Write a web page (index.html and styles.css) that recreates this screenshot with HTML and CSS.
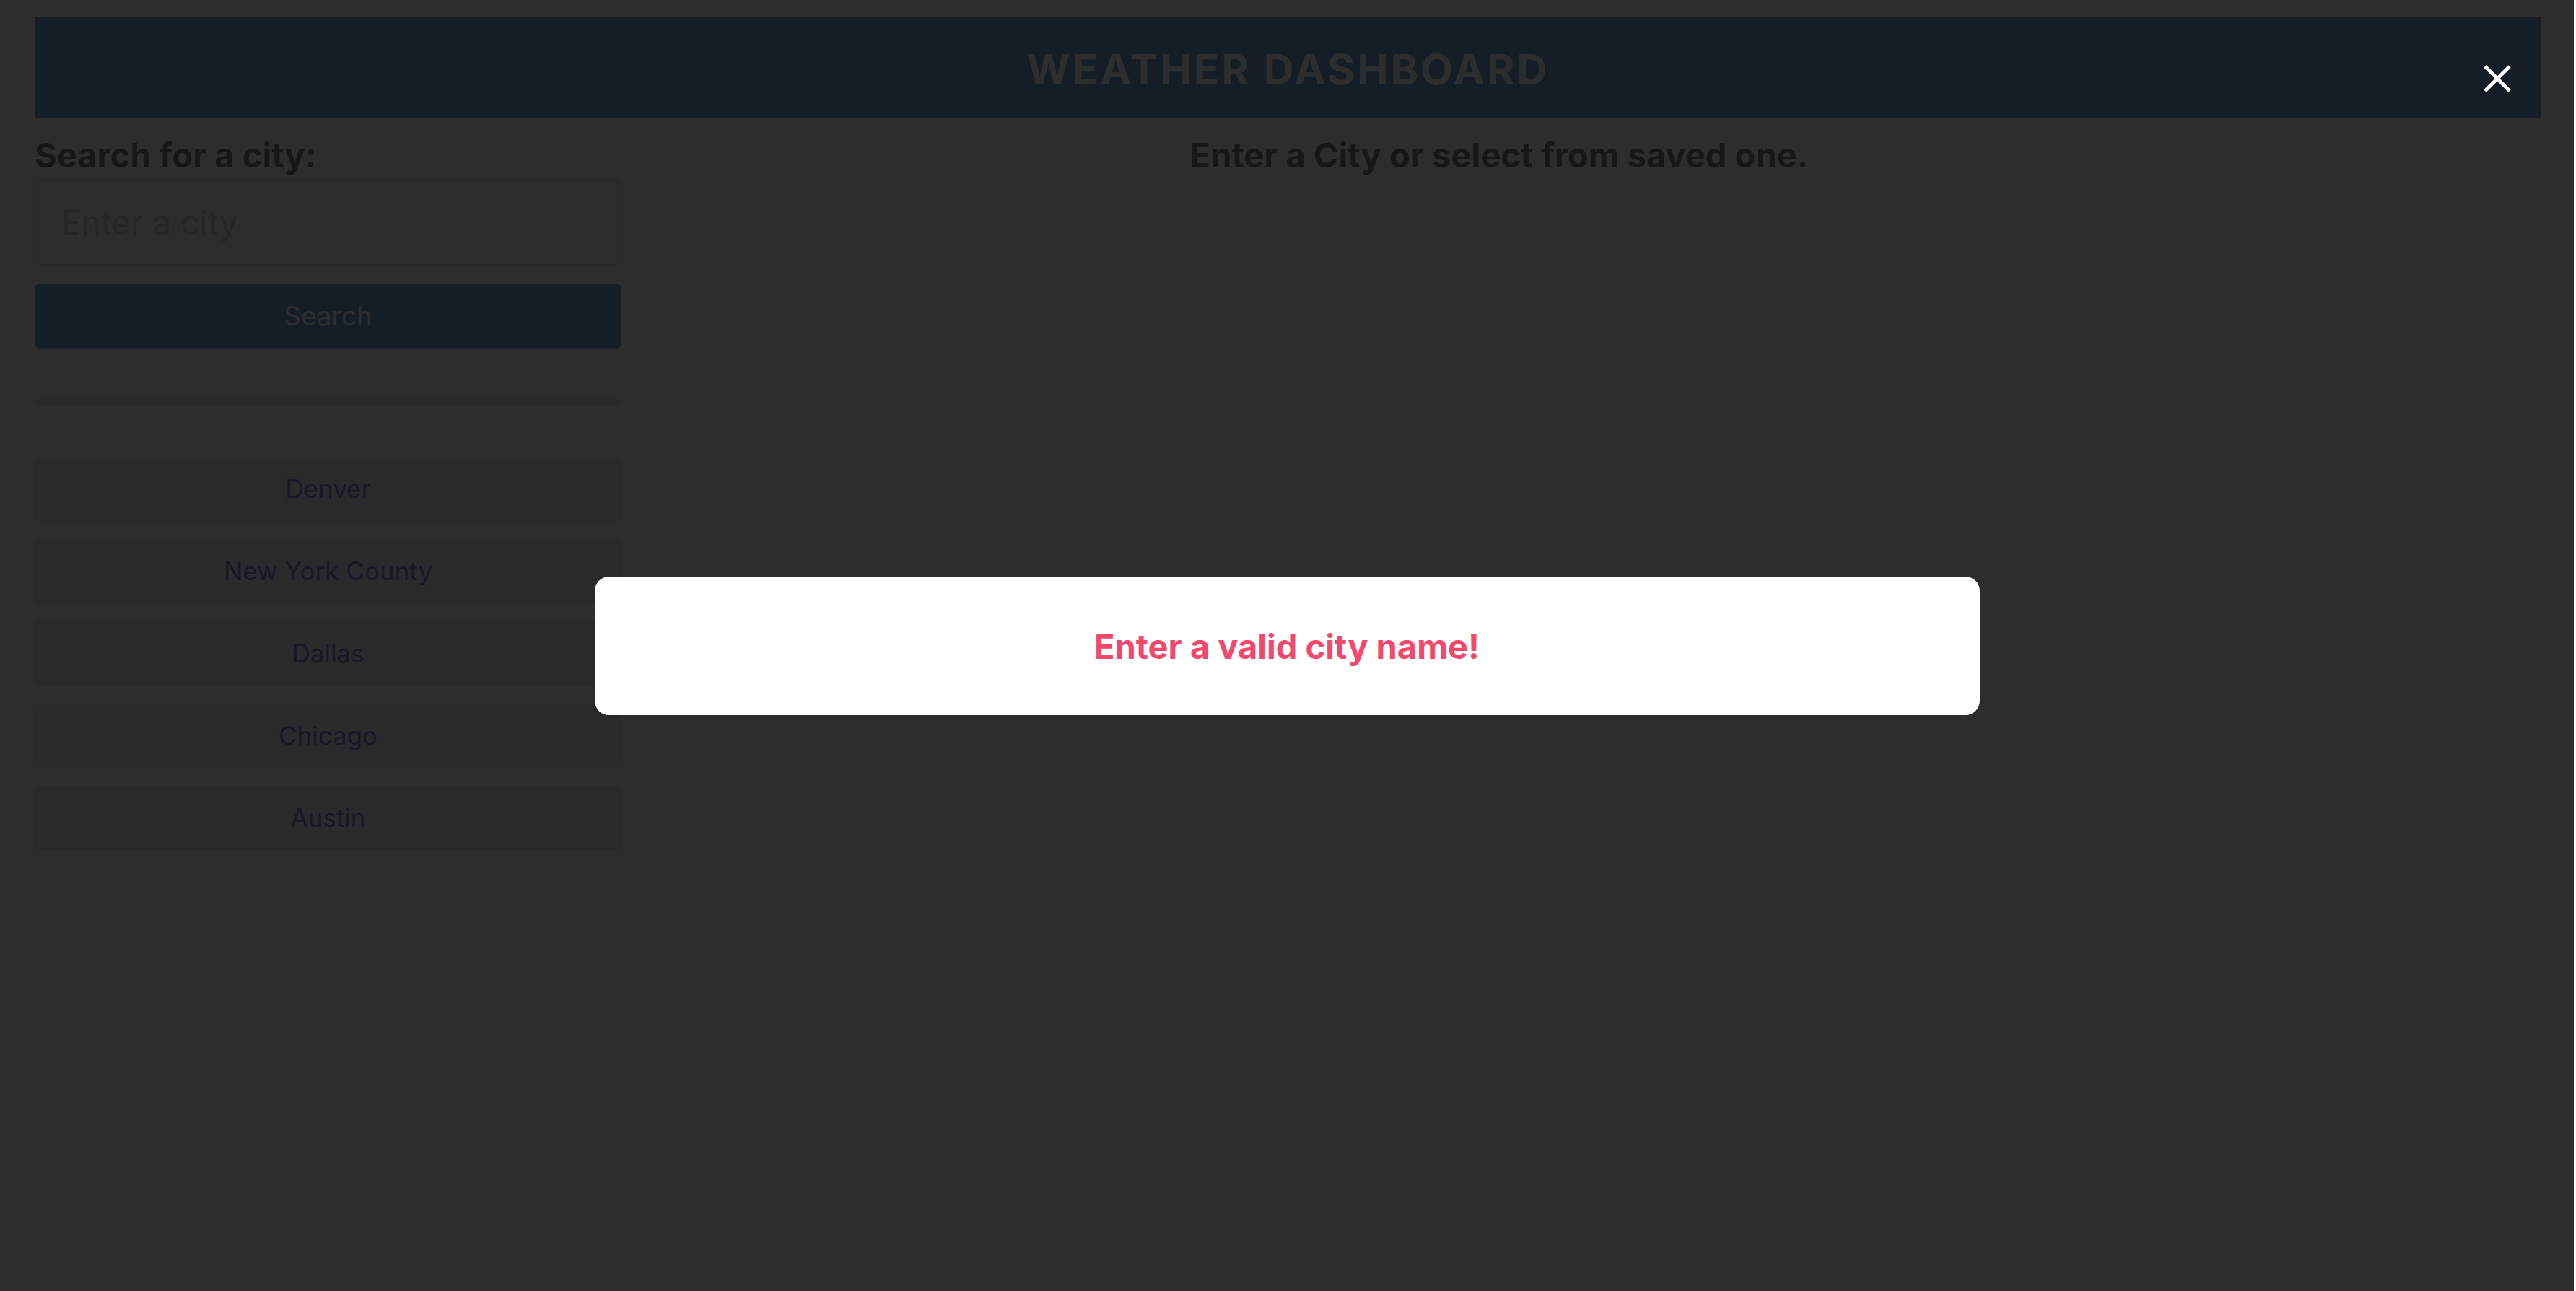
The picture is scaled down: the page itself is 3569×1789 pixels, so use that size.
FILE: index.html
```html
<!DOCTYPE html>
<html lang="en">
<head>
<meta charset="utf-8">
<title>Weather Dashboard</title>
<link rel="stylesheet" href="styles.css">
</head>
<body>
<div class="page">
  <header class="topbar">
    <h1 class="title">WEATHER DASHBOARD</h1>
  </header>
  <main class="layout">
    <aside class="sidebar">
      <h2 class="side-heading">Search for a city:</h2>
      <input class="city-input" type="text" placeholder="Enter a city">
      <button class="search-btn" type="button">Search</button>
      <div class="divider"></div>
      <ul class="saved-list">
        <li><button class="city-btn" type="button">Denver</button></li>
        <li><button class="city-btn" type="button">New York County</button></li>
        <li><button class="city-btn" type="button">Dallas</button></li>
        <li><button class="city-btn" type="button">Chicago</button></li>
        <li><button class="city-btn" type="button">Austin</button></li>
      </ul>
    </aside>
    <section class="content">
      <h2 class="content-heading">Enter a City or select from saved one.</h2>
    </section>
  </main>
</div>

<div class="overlay">
  <div class="modal">
    <p class="modal-text">Enter a valid city name!</p>
  </div>
  <button class="close-btn" type="button" aria-label="Close">
    <svg viewBox="0 0 38 38" width="38" height="38" aria-hidden="true">
      <path d="M2 2 L36 36 M36 2 L2 36" stroke="#ffffff" stroke-width="5" stroke-linecap="butt" fill="none"/>
    </svg>
  </button>
</div>
</body>
</html>
```

FILE: styles.css
```css
* {
  box-sizing: border-box;
}

html, body {
  margin: 0;
  padding: 0;
  background: #ffffff;
}

body {
  font-family: Inter, "Noto Sans", "Liberation Sans", sans-serif;
  color: #212529;
  height: 1789px;
  overflow: hidden;
}

.page {
  padding: 24px 48px 0 48px;
}

.topbar {
  height: 139px;
  background: #0a62c0;
  display: flex;
  align-items: center;
  justify-content: center;
}

.title {
  margin: 0;
  font-size: 58px;
  font-weight: 700;
  letter-spacing: 3.2px;
  color: #ffffff;
  line-height: 1;
  padding-top: 4px;
}

.layout {
  display: grid;
  grid-template-columns: 813px 2432px;
  padding-top: 23px;
}

.sidebar {
  display: flex;
  flex-direction: column;
}

.side-heading,
.content-heading {
  margin: 0;
  font-size: 47px;
  font-weight: 700;
  line-height: 57.6px;
  color: #212529;
}

.content-heading {
  text-align: center;
}

.city-input {
  margin-top: 5px;
  height: 119px;
  width: 100%;
  border: 2px solid #ced4da;
  border-radius: 12px;
  padding: 0 35px;
  font-family: inherit;
  font-size: 46px;
  color: #212529;
  background: #ffffff;
}

.city-input::placeholder {
  color: #b6b6b6;
}

.search-btn {
  margin-top: 25px;
  height: 90px;
  width: 100%;
  border: none;
  border-radius: 8px;
  background: #0a62c0;
  color: #ffffff;
  font-family: inherit;
  font-size: 37px;
}

.divider {
  margin-top: 70px;
  height: 9px;
  background: #dee2e6;
  border-radius: 2px;
}

.saved-list {
  list-style: none;
  margin: 71px 0 0 0;
  padding: 0;
  display: flex;
  flex-direction: column;
  gap: 25px;
}

.city-btn {
  width: 100%;
  height: 89px;
  border: none;
  border-radius: 6px;
  background: #d9dce0;
  color: #102fd0;
  font-family: inherit;
  font-size: 35px;
}

.overlay {
  position: fixed;
  top: 0;
  left: 0;
  bottom: 0;
  right: 3px;
  background: rgba(22, 22, 22, 0.9);
  display: flex;
  align-items: center;
  justify-content: center;
}

.modal {
  width: 1919px;
  height: 192px;
  background: #ffffff;
  border-radius: 20px;
  display: flex;
  align-items: center;
  justify-content: center;
}

.modal-text {
  margin: 0;
  font-size: 47px;
  font-weight: 700;
  color: #f3476b;
  padding-top: 2px;
}

.close-btn {
  position: absolute;
  top: 90px;
  right: 87px;
  width: 38px;
  height: 38px;
  padding: 0;
  border: none;
  background: transparent;
  display: block;
}

.close-btn svg {
  display: block;
}
```
